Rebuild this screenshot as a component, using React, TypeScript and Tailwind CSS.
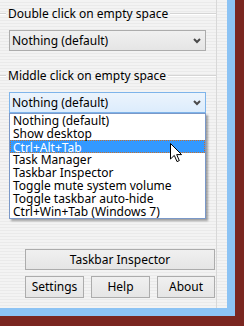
import React from "react";

const OPTIONS = [
  "Nothing (default)",
  "Show desktop",
  "Ctrl+Alt+Tab",
  "Task Manager",
  "Taskbar Inspector",
  "Toggle mute system volume",
  "Toggle taskbar auto-hide",
  "Ctrl+Win+Tab (Windows 7)",
];

function Chevron() {
  return (
    <svg width="8" height="6" viewBox="0 0 8 6" className="shrink-0">
      <polyline points="1,1 4,4 7,1" fill="none" stroke="#4a4a4a" strokeWidth="2" />
    </svg>
  );
}

function GroupHeader({ label }: { label: string }) {
  return (
    <div className="flex items-center h-[15px]">
      <div className="w-[6px] h-[2px] border-t border-[#d5d5d5] border-b border-b-white" />
      <span className="px-[2px] leading-[15px] whitespace-nowrap">{label}</span>
      <div className="flex-1 h-[2px] border-t border-[#d5d5d5] border-b border-b-white" />
    </div>
  );
}

function Button({ label, className }: { label: string; className: string }) {
  return (
    <div
      className={
        "flex items-center justify-center border border-[#acacac] bg-gradient-to-b from-[#f0f0f0] to-[#e5e5e5] " +
        className
      }
    >
      {label}
    </div>
  );
}

export default function App() {
  return (
    <div
      className="w-[244px] h-[326px] bg-[#7a2620] overflow-hidden text-[12px] text-black"
      style={{ fontFamily: '"Noto Sans", "Liberation Sans", sans-serif' }}
    >
      <div className="w-[235px] h-[316px] border-r-[8px] border-b-[8px] border-[#8cc3f4] bg-[image:repeating-linear-gradient(180deg,#f3f3f3_0px,#f3f3f3_2px,#eaeaea_2px,#eaeaea_3px)]">
        <div className="w-[217px] h-full border-r border-[#d8d8d8] pt-[6px]">
          <GroupHeader label="Double click on empty space" />

          <div className="ml-[9px] mt-[9px] w-[197px] h-[21px] border border-[#acacac] bg-gradient-to-b from-[#f0f0f0] to-[#e5e5e5] flex items-center pl-[2px] pr-[4px]">
            <span className="flex-1 leading-[15px]">Nothing (default)</span>
            <Chevron />
          </div>

          <div className="mt-[17px]">
            <GroupHeader label="Middle click on empty space" />
          </div>

          <div className="relative ml-[9px] mt-[9px] w-[197px]">
            <div className="h-[21px] border border-[#7eb4ea] bg-gradient-to-b from-[#ecf4fc] to-[#dcecfc] flex items-center pl-[2px] pr-[4px]">
              <span className="flex-1 leading-[15px]">Nothing (default)</span>
              <Chevron />
            </div>
            <div className="absolute left-0 top-[21px] w-[197px] border border-[#7a98c8] bg-white shadow-[2px_2px_2px_rgba(0,0,0,0.35)] z-10">
              {OPTIONS.map((o, i) => (
                <div
                  key={o}
                  className={
                    i === 2
                      ? "h-[13px] leading-[13px] pl-[2px] bg-[#3399ff] text-white border border-dotted border-[#c8702c] -my-0 whitespace-nowrap"
                      : "h-[13px] leading-[13px] pl-[3px] whitespace-nowrap"
                  }
                >
                  {o}
                </div>
              ))}
            </div>
            <svg
              width="13"
              height="20"
              viewBox="0 0 13 20"
              className="absolute left-[161px] top-[51px] z-20"
            >
              <path
                d="M0.5 0.5 L0.5 16 L4.3 12.4 L7 18.6 L9.3 17.6 L6.7 11.6 L11.6 11.6 Z"
                fill="white"
                stroke="black"
                strokeWidth="1"
              />
            </svg>
          </div>

          <Button label="Taskbar Inspector" className="ml-[25px] mt-[136px] w-[190px] h-[21px]" />
          <div className="ml-[25px] mt-[6px] flex gap-[7px]">
            <Button label="Settings" className="w-[59px] h-[22px]" />
            <Button label="Help" className="w-[59px] h-[22px]" />
            <Button label="About" className="w-[58px] h-[22px]" />
          </div>
        </div>
      </div>
    </div>
  );
}
